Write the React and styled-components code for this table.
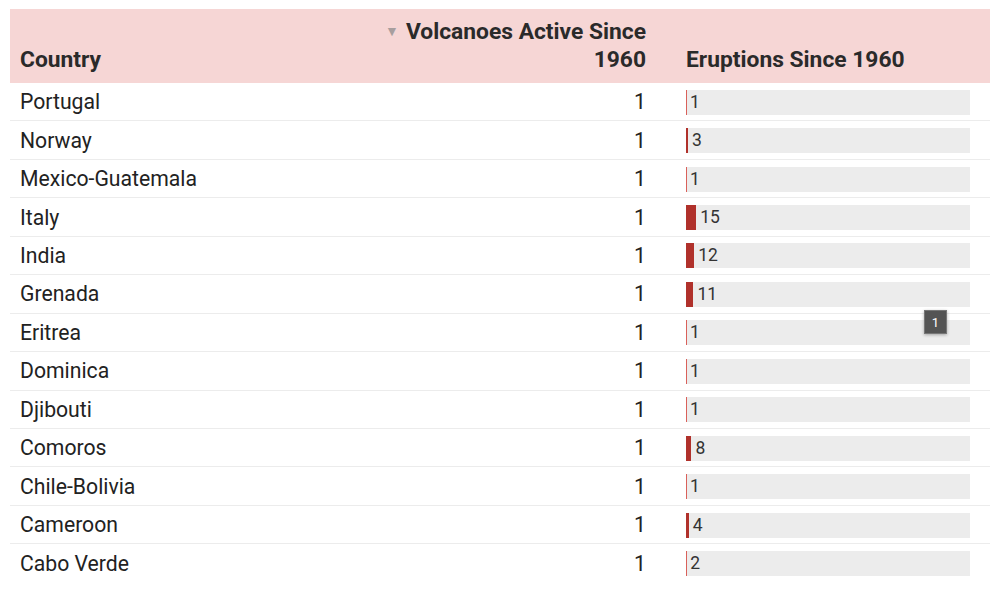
import React from "react";
import styled, { createGlobalStyle } from "styled-components";

const Global = createGlobalStyle`
  html, body { margin: 0; padding: 0; background: #fff; }
  body { font-family: Roboto, "Liberation Sans", sans-serif; color: #222; }
`;

const data = [
  ["Portugal", 1, 1],
  ["Norway", 1, 3],
  ["Mexico-Guatemala", 1, 1],
  ["Italy", 1, 15],
  ["India", 1, 12],
  ["Grenada", 1, 11],
  ["Eritrea", 1, 1],
  ["Dominica", 1, 1],
  ["Djibouti", 1, 1],
  ["Comoros", 1, 8],
  ["Chile-Bolivia", 1, 1],
  ["Cameroon", 1, 4],
  ["Cabo Verde", 1, 2],
];

const Wrap = styled.div`
  padding: 9px 10px 0 10px;
  position: relative;
`;

const Table = styled.div`
  display: grid;
  grid-template-columns: 366px 300px 314px;
`;

const HeadCell = styled.div`
  background: #f6d6d5;
  height: 74px;
  box-sizing: border-box;
  padding: 0 ${(p) => (p.$right ? "30px" : "10px")} 9px 10px;
  display: flex;
  align-items: flex-end;
  justify-content: ${(p) => (p.$right ? "flex-end" : "flex-start")};
  text-align: ${(p) => (p.$right ? "right" : "left")};
  font-weight: 700;
  font-size: 22.8px;
  line-height: 28px;
  color: #2a2a2a;
  white-space: nowrap;
`;

const SortArrow = styled.span`
  color: #a89e9e;
  font-size: 14px;
  margin-right: 7px;
  vertical-align: 3px;
`;

const Cell = styled.div`
  height: 38.45px;
  box-sizing: border-box;
  border-bottom: ${(p) => (p.$last ? "none" : "1px solid #ececec")};
  padding: 0 ${(p) => (p.$right ? "30px" : "10px")} 0 10px;
  display: flex;
  align-items: center;
  justify-content: ${(p) => (p.$right ? "flex-end" : "flex-start")};
  font-size: 21.2px;
  color: #222;
`;

const BarCell = styled(Cell)`
  padding: 0 20px 0 10px;
`;

const Track = styled.div`
  flex: 1;
  height: 25px;
  background: #ececec;
  display: flex;
  align-items: stretch;
  margin-top: 1px;
`;

const Bar = styled.div`
  background: ${(p) => (p.$thin ? "#d9605a" : "#b0312b")};
  flex-shrink: 0;
`;

const BarLabel = styled.span`
  font-size: 17.5px;
  line-height: 25px;
  color: #333;
  padding-left: ${(p) => (p.$thin ? "3px" : "4px")};
`;

const Tooltip = styled.div`
  position: absolute;
  left: 924px;
  top: 310px;
  width: 23px;
  height: 24px;
  background: #545454;
  color: #fff;
  font-size: 13px;
  display: flex;
  align-items: center;
  justify-content: center;
  box-shadow: 0 1px 3px rgba(0, 0, 0, 0.3);
  border: 1px solid #777;
  box-sizing: border-box;
`;

export default function App() {
  return (
    <>
      <Global />
      <Wrap>
        <Table>
          <HeadCell>Country</HeadCell>
          <HeadCell $right>
            <div>
              <SortArrow>▼</SortArrow>Volcanoes Active Since
              <br />
              1960
            </div>
          </HeadCell>
          <HeadCell>Eruptions Since 1960</HeadCell>
          {data.map(([name, v, e], i) => {
            const last = i === data.length - 1;
            const w = Math.max(1, e * 0.68);
            return (
              <React.Fragment key={name}>
                <Cell $last={last}>{name}</Cell>
                <Cell $last={last} $right>
                  {v}
                </Cell>
                <BarCell $last={last}>
                  <Track>
                    <Bar $thin={e <= 2} style={{ width: `${w}px` }} />
                    <BarLabel $thin={e <= 2}>{e}</BarLabel>
                  </Track>
                </BarCell>
              </React.Fragment>
            );
          })}
        </Table>
        <Tooltip>1</Tooltip>
      </Wrap>
    </>
  );
}
